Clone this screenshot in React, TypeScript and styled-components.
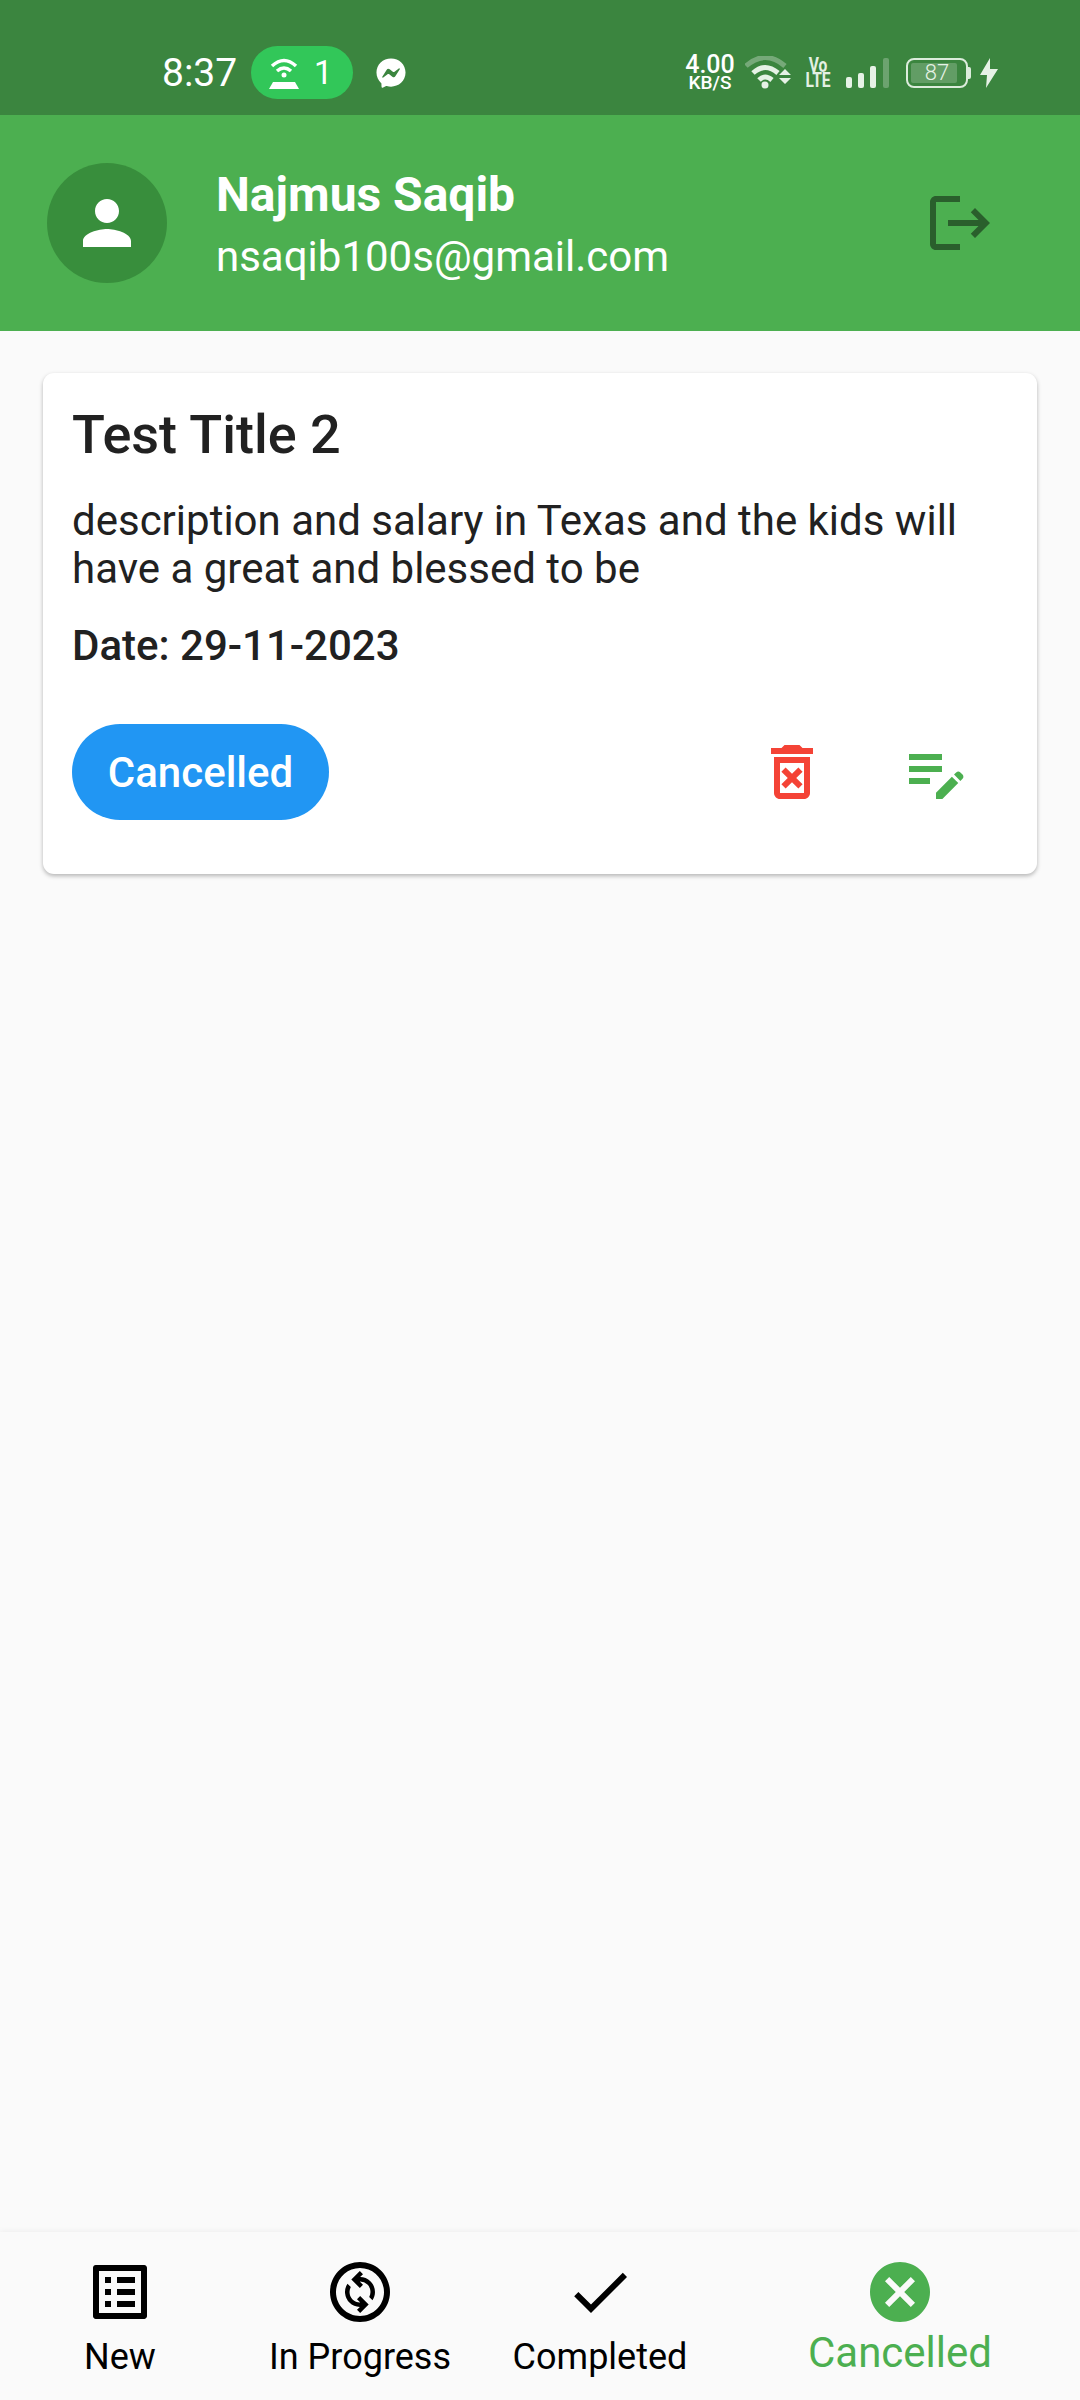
import React from "react";
import styled, { createGlobalStyle } from "styled-components";
import { MdOutlineChangeCircle, MdOutlineListAlt, MdDone, MdCancel, MdOutlineDeleteForever, MdEditNote, MdLogout, MdPerson } from "react-icons/md";
import { FaFacebookMessenger } from "react-icons/fa";

const Global = createGlobalStyle`
  html, body { margin: 0; padding: 0; background: #fafafa; }
  body { font-family: Roboto, "Noto Sans", sans-serif; }
`;

const Screen = styled.div`
  width: 1080px;
  height: 2400px;
  display: flex;
  flex-direction: column;
  background: #fafafa;
  overflow: hidden;
`;

const StatusBar = styled.div`
  height: 115px;
  flex: none;
  background: #3b853f;
  display: flex;
  align-items: center;
  justify-content: space-between;
  padding: 30px 82px 0 162px;
  color: #fff;
  box-sizing: border-box;
`;

const StatusGroup = styled.div`
  display: flex;
  align-items: center;
`;

const Time = styled.span`
  font-size: 39px;
  line-height: 36px;
  width: 89px;
`;

const Pill = styled.div`
  width: 102px;
  height: 53px;
  border-radius: 27px;
  background: #32c759;
  display: flex;
  align-items: center;
  padding-left: 18px;
  gap: 15px;
  box-sizing: border-box;
  font-size: 33px;
  margin-right: 23px;
`;

const Speed = styled.div`
  display: flex;
  flex-direction: column;
  align-items: center;
  font-weight: 500;
  margin-right: 8px;
  width: 54px;
`;

const SpeedValue = styled.span`
  font-size: 25px;
  line-height: 20px;
`;

const SpeedUnit = styled.span`
  font-size: 19px;
  line-height: 15px;
`;

const Lte = styled.div`
  display: flex;
  flex-direction: column;
  align-items: center;
  font-weight: 700;
  font-size: 20px;
  line-height: 15px;
  color: #e3f0e3;
  width: 22px;
  margin: 0 17px 0 16px;
  transform: scaleX(0.78);
`;

const Battery = styled.div`
  position: relative;
  width: 62px;
  height: 30px;
  box-sizing: border-box;
  border: 2px solid #dcecdc;
  border-radius: 8px;
  margin-left: 17px;
  display: flex;
  align-items: center;
  justify-content: center;
  font-size: 22px;
  font-weight: 300;
  color: #e6f2e6;
`;

const BatteryFill = styled.div`
  position: absolute;
  left: 3px;
  top: 3px;
  bottom: 3px;
  width: 46px;
  background: rgba(255, 255, 255, 0.2);
  border-radius: 2px;
`;

const BatteryLabel = styled.span`
  position: relative;
`;

const BatteryCap = styled.div`
  width: 3px;
  height: 12px;
  background: #dcecdc;
  border-radius: 0 2px 2px 0;
  margin-right: 9px;
`;

const Header = styled.header`
  height: 216px;
  flex: none;
  background: #4caf50;
  display: flex;
  align-items: center;
  padding: 0 84px 0 47px;
  box-sizing: border-box;
`;

const Avatar = styled.div`
  width: 120px;
  height: 120px;
  border-radius: 50%;
  background: #388e3c;
  color: #fff;
  display: flex;
  align-items: center;
  justify-content: center;
  flex: none;
`;

const HeaderText = styled.div`
  margin-left: 49px;
  padding-top: 6px;
  gap: 6px;
  color: #fff;
  flex: 1;
  display: flex;
  flex-direction: column;
`;

const Name = styled.div`
  font-size: 48px;
  font-weight: 700;
  line-height: 56px;
`;

const Email = styled.div`
  font-size: 42px;
  line-height: 56px;
`;

const LogoutIcon = styled(MdLogout)`
  color: #2a5f2c;
  flex: none;
`;

const Content = styled.main`
  flex: 1;
  padding: 42px 43px 0;
`;

const Card = styled.section`
  background: #fff;
  border-radius: 11px;
  box-shadow: 0 2px 4px rgba(0, 0, 0, 0.28);
  padding: 29px 29px 53px 29px;
  height: 501px;
  box-sizing: border-box;
`;

const Title = styled.h2`
  margin: 0;
  font-size: 54px;
  font-weight: 500;
  line-height: 66px;
  color: #212121;
`;

const Description = styled.p`
  margin: 29px 0 0;
  font-size: 42px;
  line-height: 48px;
  color: #212121;
`;

const DateLine = styled.div`
  margin-top: 29px;
  font-size: 42px;
  font-weight: 500;
  line-height: 48px;
  color: #212121;
`;

const Actions = styled.div`
  margin-top: 54px;
  display: flex;
  align-items: center;
  gap: 72px;
  padding-right: 36px;
`;

const StatusButton = styled.div`
  width: 257px;
  height: 96px;
  border-radius: 48px;
  background: #2196f3;
  color: #fff;
  font-size: 42px;
  font-weight: 500;
  display: flex;
  align-items: center;
  justify-content: center;
  margin-right: auto;
`;

const ActionIcon = styled.span<{ $color: string }>`
  display: flex;
  color: ${(p) => p.$color};
`;

const BottomNav = styled.nav`
  flex: none;
  height: 168px;
  display: grid;
  grid-template-columns: 2fr 2fr 2fr 3fr;
  background: #fafafa;
  box-shadow: 0 -1px 6px rgba(0, 0, 0, 0.05);
  position: relative;
`;

const NavItem = styled.div<{ $active?: boolean }>`
  display: flex;
  flex-direction: column;
  align-items: center;
  padding-top: 24px;
  color: ${(p) => (p.$active ? "#4caf50" : "#000")};
`;

const NavLabel = styled.span<{ $active?: boolean }>`
  font-size: ${(p) => (p.$active ? 42 : 36)}px;
  line-height: 44px;
  margin-top: ${(p) => (p.$active ? 3 : 7)}px;
  white-space: nowrap;
`;

const WifiCalling = () => (
  <svg width="30" height="32" viewBox="0 0 30 32" fill="none">
    <path d="M3 9 Q15 -2 27 9" stroke="#fff" strokeWidth="3.5" />
    <path d="M8 14 Q15 8 22 14" stroke="#fff" strokeWidth="3.5" />
    <circle cx="15" cy="18" r="2.5" fill="#fff" />
    <path d="M0 32 L4 25 H26 L30 32 Z" fill="#fff" />
  </svg>
);

const Wifi = () => (
  <svg width="46" height="33" viewBox="0 0 46 33" fill="none">
    <path d="M1 10 Q20 -7 40 10" stroke="#fff" strokeOpacity=".3" strokeWidth="5" />
    <path d="M8 17 Q20 6 33 17" stroke="#e6f2e6" strokeWidth="5" />
    <path d="M14 24 Q20 18 27 24" stroke="#e6f2e6" strokeWidth="5" />
    <circle cx="20" cy="29" r="3.5" fill="#e6f2e6" />
    <path d="M34 19 L40 13 L46 19 Z M34 22 H46 L40 28 Z" fill="#e6f2e6" />
  </svg>
);

const Signal = () => (
  <svg width="43" height="30" viewBox="0 0 43 30">
    <rect x="0" y="19" width="6" height="11" rx="2" fill="#e6f2e6" />
    <rect x="12" y="15" width="6" height="15" rx="2" fill="#e6f2e6" />
    <rect x="24" y="8" width="6" height="22" rx="2" fill="#e6f2e6" />
    <rect x="37" y="0" width="6" height="30" rx="2" fill="#fff" fillOpacity=".25" />
  </svg>
);

const Bolt = () => (
  <svg width="18" height="30" viewBox="0 0 18 30">
    <path d="M10 0 L0 17 H7 L6 30 L18 11 H10 Z" fill="#e6f2e6" />
  </svg>
);

export default function App() {
  return (
    <Screen>
      <Global />
      <StatusBar>
        <StatusGroup>
          <Time>8:37</Time>
          <Pill>
            <WifiCalling />
            <span>1</span>
          </Pill>
          <FaFacebookMessenger size={30} color="#fff" />
        </StatusGroup>
        <StatusGroup>
          <Speed>
            <SpeedValue>4.00</SpeedValue>
            <SpeedUnit>KB/S</SpeedUnit>
          </Speed>
          <Wifi />
          <Lte>
            <span>Vo</span>
            <span>LTE</span>
          </Lte>
          <Signal />
          <Battery>
            <BatteryFill />
            <BatteryLabel>87</BatteryLabel>
          </Battery>
          <BatteryCap />
          <Bolt />
        </StatusGroup>
      </StatusBar>
      <Header>
        <Avatar>
          <MdPerson size={72} />
        </Avatar>
        <HeaderText>
          <Name>Najmus Saqib</Name>
          <Email>nsaqib100s@gmail.com</Email>
        </HeaderText>
        <LogoutIcon size={72} />
      </Header>
      <Content>
        <Card>
          <Title>Test Title 2</Title>
          <Description>description and salary in Texas and the kids will have a great and blessed to be</Description>
          <DateLine>Date: 29-11-2023</DateLine>
          <Actions>
            <StatusButton>Cancelled</StatusButton>
            <ActionIcon $color="#f44336"><MdOutlineDeleteForever size={72} /></ActionIcon>
            <ActionIcon $color="#4caf50"><MdEditNote size={72} /></ActionIcon>
          </Actions>
        </Card>
      </Content>
      <BottomNav>
        <NavItem>
          <MdOutlineListAlt size={72} />
          <NavLabel>New</NavLabel>
        </NavItem>
        <NavItem>
          <MdOutlineChangeCircle size={72} />
          <NavLabel>In Progress</NavLabel>
        </NavItem>
        <NavItem>
          <MdDone size={72} />
          <NavLabel>Completed</NavLabel>
        </NavItem>
        <NavItem $active>
          <MdCancel size={72} />
          <NavLabel $active>Cancelled</NavLabel>
        </NavItem>
      </BottomNav>
    </Screen>
  );
}
